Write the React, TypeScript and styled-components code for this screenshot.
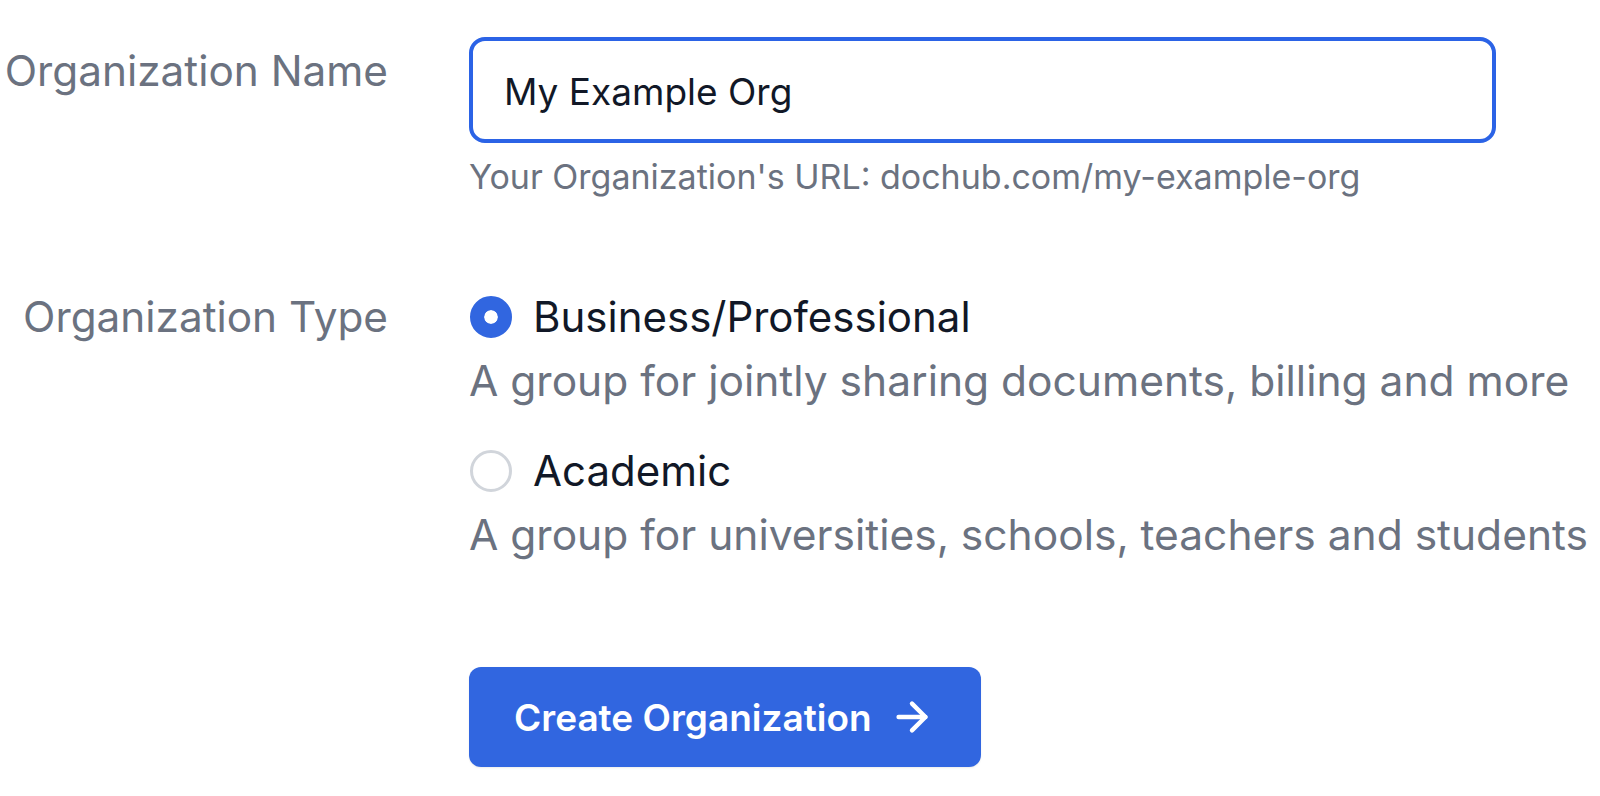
import { createGlobalStyle } from 'styled-components';
import styled from 'styled-components';
import { ArrowRight } from 'lucide-react';
import { useState } from 'react';

const GlobalStyle = createGlobalStyle`
  html, body {
    margin: 0;
    padding: 0;
    background: #ffffff;
  }
  body {
    font-family: Inter, "Noto Sans", "Liberation Sans", sans-serif;
    -webkit-font-smoothing: antialiased;
  }
  * {
    box-sizing: border-box;
  }
`;

const Form = styled.form`
  display: grid;
  grid-template-columns: 388px 1027px;
  align-content: start;
  column-gap: 81px;
  row-gap: 94px;
  padding-top: 37px;
  width: 1600px;
  height: 796px;
  overflow: hidden;
`;

const FieldLabel = styled.div<{ $offset?: number }>`
  font-size: 42.3px;
  line-height: 52px;
  color: #6b7280;
  text-align: right;
  white-space: nowrap;
  margin-top: ${props => props.$offset ?? 0}px;
`;

const Field = styled.div`
  display: flex;
  flex-direction: column;
  min-width: 0;
`;

const TextInput = styled.input`
  width: 1027px;
  height: 106px;
  padding: 2px 31px 0;
  border: 4px solid #2b63e6;
  border-radius: 16px;
  font-family: inherit;
  font-size: 37px;
  color: #111827;
  background: #ffffff;
  outline: none;
`;

const Hint = styled.div`
  margin-top: 13px;
  font-size: 34px;
  line-height: 41px;
  color: #6b7280;
  white-space: nowrap;
`;

const Options = styled.div`
  display: flex;
  flex-direction: column;
  gap: 38px;
`;

const Option = styled.label`
  display: flex;
  flex-direction: column;
  cursor: pointer;
`;

const OptionRow = styled.div`
  display: flex;
  align-items: center;
  gap: 21px;
`;

const Radio = styled.span<{ $checked: boolean }>`
  width: 42px;
  height: 42px;
  margin-left: 1px;
  border-radius: 50%;
  flex-shrink: 0;
  background: ${props => (props.$checked ? '#3166e0' : '#ffffff')};
  border: ${props => (props.$checked ? '14px solid #3166e0' : '3px solid #d1d5db')};
  box-shadow: ${props => (props.$checked ? 'inset 0 0 0 20px #ffffff' : 'none')};
`;

const OptionTitle = styled.span`
  font-size: 42px;
  line-height: 52px;
  color: #111827;
  white-space: nowrap;
`;

const OptionDesc = styled.span`
  margin-top: 12px;
  font-size: 42.5px;
  line-height: 52px;
  color: #6b7280;
  white-space: nowrap;
`;

const Actions = styled.div`
  grid-column: 2;
  margin-top: 12px;
`;

const SubmitButton = styled.button`
  display: inline-flex;
  align-items: center;
  gap: 17px;
  height: 100px;
  padding: 0 46px 0 45px;
  border: none;
  border-radius: 12px;
  background: #3166e0;
  color: #ffffff;
  font-family: inherit;
  font-size: 37px;
  font-weight: 600;
  box-shadow: 0 1px 2px rgba(0, 0, 0, 0.08);
  cursor: pointer;
`;

const orgTypes = [
  { id: 'business', title: 'Business/Professional', desc: 'A group for jointly sharing documents, billing and more' },
  { id: 'academic', title: 'Academic', desc: 'A group for universities, schools, teachers and students' },
];

export default function App() {
  const [name, setName] = useState('My Example Org');
  const [type, setType] = useState('business');

  return (
    <>
      <GlobalStyle />
      <Form onSubmit={e => e.preventDefault()}>
        <FieldLabel $offset={8}>Organization Name</FieldLabel>
        <Field>
          <TextInput value={name} onChange={e => setName(e.target.value)} />
          <Hint>Your Organization's URL: dochub.com/my-example-org</Hint>
        </Field>

        <FieldLabel>Organization Type</FieldLabel>
        <Options>
          {orgTypes.map(t => (
            <Option key={t.id} onClick={() => setType(t.id)}>
              <OptionRow>
                <Radio $checked={type === t.id} />
                <OptionTitle>{t.title}</OptionTitle>
              </OptionRow>
              <OptionDesc>{t.desc}</OptionDesc>
            </Option>
          ))}
        </Options>

        <Actions>
          <SubmitButton type="submit">
            Create Organization
            <ArrowRight size={46} strokeWidth={2.3} />
          </SubmitButton>
        </Actions>
      </Form>
    </>
  );
}
